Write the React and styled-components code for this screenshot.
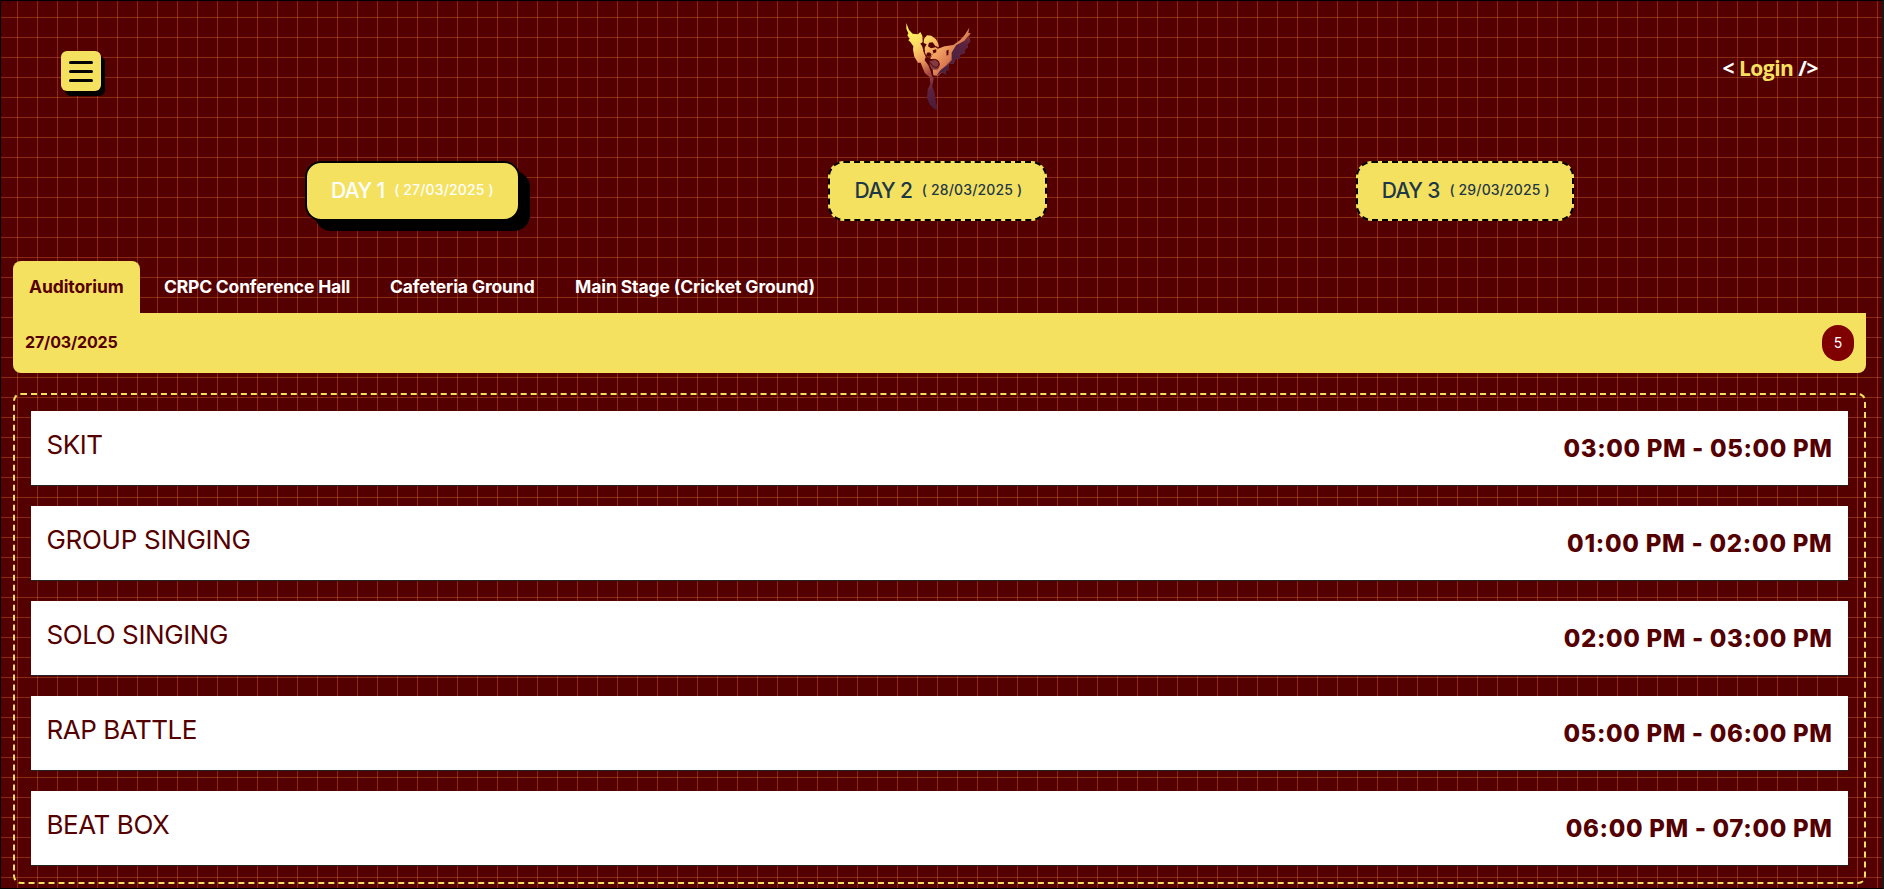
import React from 'react';
import styled, { createGlobalStyle } from 'styled-components';

const maroon = '#550000';
const yellow = '#f5e160';
const gridLine = 'rgba(255, 130, 70, 0.31)';

const GlobalStyle = createGlobalStyle`
  *, *::before, *::after { box-sizing: border-box; }
  body {
    margin: 0;
    background: #000;
    font-family: Inter, 'Liberation Sans', sans-serif;
    overflow: hidden;
  }
  button { font: inherit; border: 0; margin: 0; padding: 0; cursor: pointer; }
`;

const Page = styled.div`
  width: 1884px;
  height: 889px;
  border: 1px solid #000;
  border-right: 2px solid #1a1a1a;
  background-color: ${maroon};
  background-image:
    linear-gradient(to right, ${gridLine} 1px, transparent 1px),
    linear-gradient(to bottom, ${gridLine} 1px, transparent 1px);
  background-size: 20px 20px;
  background-position: 16px 16px;
`;

const Header = styled.header`
  display: grid;
  grid-template-columns: 1fr auto 1fr;
  align-items: start;
  height: 160px;
  padding: 0 64px 0 60px;
`;

const MenuButton = styled.button`
  display: flex;
  flex-direction: column;
  gap: 6px;
  align-items: center;
  width: 40px;
  height: 40px;
  margin-top: 50px;
  padding-top: 10px;
  border-radius: 6px;
  background: ${yellow};
  box-shadow: 4px 5px 0 #000;
`;

const MenuLine = styled.span`
  width: 24px;
  height: 3px;
  border-radius: 2px;
  background: #000;
`;

const Logo = styled.svg`
  width: 100px;
  height: 110px;
  margin: 9px 0 0 1px;
`;

const Login = styled.a`
  justify-self: end;
  margin-top: 52px;
  color: #fff;
  font: 700 21px/30px 'Open Sans', sans-serif;
  letter-spacing: -0.5px;
  span { color: ${yellow}; }
`;

const Days = styled.nav`
  display: flex;
  gap: 308.4px;
  padding-left: 304px;
  height: 100px;
`;

const DayButton = styled.button`
  display: flex;
  align-items: center;
  gap: 9.5px;
  flex: none;
  width: ${(p) => p.$width}px;
  height: 60px;
  padding: 0 0 1px 24px;
  border: 2px ${(p) => (p.$active ? 'solid' : 'dashed')} #000;
  border-radius: 16px;
  background: ${yellow};
  color: ${(p) => (p.$active ? '#fff' : '#1f3847')};
  box-shadow: ${(p) => (p.$active ? '10px 10px 0 #000' : 'none')};
  white-space: nowrap;
`;

const DayName = styled.span`
  font-size: 21px;
  font-weight: 550;
  letter-spacing: -0.6px;
`;

const DayDate = styled.span`
  padding-bottom: 2px;
  font-size: 14px;
  font-weight: 550;
  line-height: 20px;
  letter-spacing: 0.15px;
`;

const Tabs = styled.div`
  display: flex;
  gap: 8px;
  padding-left: 12px;
`;

const Tab = styled.button`
  height: 52px;
  padding: 0 16px 2px;
  border-radius: 8px 8px 0 0;
  background: ${(p) => (p.$active ? yellow : 'transparent')};
  color: ${(p) => (p.$active ? maroon : '#fff')};
  font-size: 17.5px;
  font-weight: 700;
  letter-spacing: ${(p) => p.$spacing}px;
  width: ${(p) => p.$width}px;
  text-align: left;
  white-space: nowrap;
`;

const DateBar = styled.div`
  display: flex;
  align-items: center;
  justify-content: space-between;
  width: 1853px;
  height: 60px;
  margin-left: 12px;
  padding: 0 12px;
  border-radius: 0 0 8px 8px;
  background: ${yellow};
  color: ${maroon};
  font-size: 16px;
  font-weight: 700;
`;

const BarDate = styled.span`
  padding-bottom: 2px;
  letter-spacing: -0.15px;
`;

const Count = styled.span`
  display: grid;
  place-items: center;
  width: 32px;
  height: 36px;
  padding-bottom: 1px;
  border-radius: 16px;
  background: #800000;
  color: #fff;
  font-size: 14px;
  font-weight: 400;
`;

const EventList = styled.ul`
  display: flex;
  flex-direction: column;
  gap: 20px;
  width: 1853px;
  height: 491px;
  margin: 20px 0 0 12px;
  padding: 16px;
  border: 2px dashed ${yellow};
  border-radius: 8px;
  list-style: none;
`;

const EventRow = styled.li`
  display: flex;
  justify-content: space-between;
  height: 75px;
  padding: 0 16px 0 15.4px;
  border-bottom: 1px solid #222;
  background: #fff;
  color: ${maroon};
`;

const EventName = styled.span`
  padding-top: 16px;
  font-size: 26px;
  line-height: 36px;
  letter-spacing: ${(p) => p.$spacing}px;
`;

const EventTime = styled.span`
  margin-right: -0.5px;
  padding-top: 20px;
  font-size: 24px;
  font-weight: 800;
  line-height: 36px;
  letter-spacing: ${(p) => p.$spacing}px;
`;

const days = [
  { name: 'DAY 1', date: '27/03/2025', width: 215 },
  { name: 'DAY 2', date: '28/03/2025', width: 219 },
  { name: 'DAY 3', date: '29/03/2025', width: 218 },
];

const venues = [
  { name: 'Auditorium', width: 127, spacing: -0.1 },
  { name: 'CRPC Conference Hall', width: 218, spacing: -0.2 },
  { name: 'Cafeteria Ground', width: 177, spacing: -0.12 },
  { name: 'Main Stage (Cricket Ground)', width: 272, spacing: -0.11 },
];

const events = [
  { name: 'SKIT', time: '03:00 PM - 05:00 PM', nameSpacing: -0.4, timeSpacing: 0.64 },
  { name: 'GROUP SINGING', time: '01:00 PM - 02:00 PM', nameSpacing: -0.28, timeSpacing: 0.74 },
  { name: 'SOLO SINGING', time: '02:00 PM - 03:00 PM', nameSpacing: -0.4, timeSpacing: 0.64 },
  { name: 'RAP BATTLE', time: '05:00 PM - 06:00 PM', nameSpacing: -0.46, timeSpacing: 0.64 },
  { name: 'BEAT BOX', time: '06:00 PM - 07:00 PM', nameSpacing: -0.4, timeSpacing: 0.66 },
];

function Phoenix() {
  return (
    <Logo viewBox="0 0 300 330" aria-label="Phoenix">
      <defs>
        <linearGradient id="flame" gradientUnits="userSpaceOnUse" x1="60" y1="60" x2="190" y2="250">
          <stop offset="0" stopColor="#fff45c" />
          <stop offset="0.22" stopColor="#fbd765" />
          <stop offset="0.42" stopColor="#ef9b60" />
          <stop offset="0.6" stopColor="#a94b40" />
          <stop offset="0.8" stopColor="#5c2140" />
          <stop offset="1" stopColor="#4a1c3c" />
        </linearGradient>
        <linearGradient id="wing" gradientUnits="userSpaceOnUse" x1="150" y1="110" x2="215" y2="165">
          <stop offset="0" stopColor="#f5a765" />
          <stop offset="0.55" stopColor="#d97850" />
          <stop offset="0.8" stopColor="#713040" />
          <stop offset="1" stopColor="#4b2042" />
        </linearGradient>
        <linearGradient id="edge" gradientUnits="userSpaceOnUse" x1="238" y1="60" x2="190" y2="160">
          <stop offset="0" stopColor="#8a3038" />
          <stop offset="0.4" stopColor="#5a2340" />
          <stop offset="1" stopColor="#4b2142" />
        </linearGradient>
      </defs>
      <path fill="url(#flame)" d="M49 39 L57 60 L68 71 L84 73 L91 66 L97 77 L98 96 L91 101 L99 112 L101 126 L107 139 L104 151 L115 166 L121 180 L125 195 L131 207 L127 229 L134 249 L137 273 L141 286 L140 302 L127 292 L119 283 L111 263 L113 239 L121 222 L119 202 L105 190 L99 176 L92 158 L84 158 L73 140 L69 119 L70 109 L61 96 L55 91 L59 86 L52 76 L55 70 L49 56 Z" />
      <path fill="url(#flame)" d="M102 87 L111 76 L124 77 L138 88 L145 101 L147 112 L136 108 L128 97 L117 98 L114 109 L123 115 L137 112 L144 117 L133 124 L125 139 L113 141 L105 132 L104 113 L110 103 L101 99 Z" />
      <path fill="url(#wing)" d="M144 116 L164 109 L190 105 L210 91 L224 75 L238 53 L235 69 L242 69 L236 81 L241 94 L231 104 L234 112 L223 119 L224 130 L208 134 L211 145 L197 147 L191 161 L177 160 L174 178 L180 180 L166 181 L169 194 L156 187 L144 198 L130 196 L128 177 L144 178 L149 163 L144 150 L120 148 L130 130 Z" />
      <path fill="url(#edge)" d="M242 69 L236 81 L241 94 L231 104 L234 112 L223 119 L224 130 L208 134 L211 145 L197 147 L191 161 L177 160 L174 178 L180 180 L166 181 L169 194 L156 187 L139 198 L151 181 L170 166 L185 151 L185 128 L198 106 L223 92 Z" />
      <path fill="#803a42" d="M119 153 L139 149 L149 158 L148 171 L139 179 L125 178 L119 165 Z" />
      <path fill="#550000" d="M169 122 l7 -3 -1 15 -5 3 z" />
      <path fill="none" stroke="#550000" strokeWidth="3" d="M96 99 C103 130 106 143 123 149 C139 145 147 153 147 164 C143 180 125 169 121 158" />
      <path fill="#550000" d="M112 128 C122 125 130 135 119 140 C110 141 106 136 112 128 M128 121 L138 118 L139 127 L131 130 Z" />
    </Logo>
  );
}

export default function App() {
  return (
    <>
      <GlobalStyle />
      <Page>
        <Header>
          <MenuButton aria-label="Menu">
            <MenuLine />
            <MenuLine />
            <MenuLine />
          </MenuButton>
          <Phoenix />
          <Login>
            &lt; <span>Login</span> /&gt;
          </Login>
        </Header>
        <Days>
          {days.map((d, i) => (
            <DayButton key={d.name} $active={i === 0} $width={d.width}>
              <DayName>{d.name}</DayName>
              <DayDate>( {d.date} )</DayDate>
            </DayButton>
          ))}
        </Days>
        <Tabs>
          {venues.map((v, i) => (
            <Tab key={v.name} $active={i === 0} $width={v.width} $spacing={v.spacing}>
              {v.name}
            </Tab>
          ))}
        </Tabs>
        <DateBar>
          <BarDate>27/03/2025</BarDate>
          <Count>5</Count>
        </DateBar>
        <EventList>
          {events.map((e) => (
            <EventRow key={e.name}>
              <EventName $spacing={e.nameSpacing}>{e.name}</EventName>
              <EventTime $spacing={e.timeSpacing}>{e.time}</EventTime>
            </EventRow>
          ))}
        </EventList>
      </Page>
    </>
  );
}
